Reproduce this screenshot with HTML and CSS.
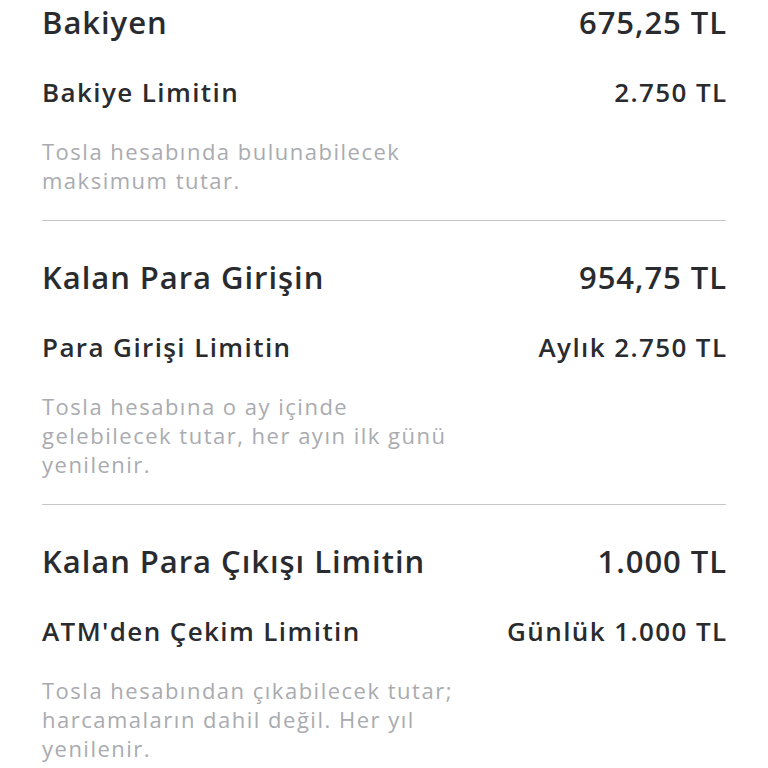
FILE: index.html
```html
<!DOCTYPE html>
<html>

<head>
    <title>Limitlerim</title>
    <link rel="stylesheet" href="styles.css">
</head>

<body>
    <div class="limits">
        <div class="section">
            <div class="row title">
                <span>Bakiyen</span>
                <span class="value">675,25 TL</span>
            </div>
            <div class="row sub">
                <span>Bakiye Limitin</span>
                <span class="value">2.750 TL</span>
            </div>
            <p class="desc">Tosla hesabında bulunabilecek<br>maksimum tutar.</p>
        </div>
        <div class="section">
            <div class="row title">
                <span>Kalan Para Girişin</span>
                <span class="value">954,75 TL</span>
            </div>
            <div class="row sub">
                <span>Para Girişi Limitin</span>
                <span class="value">Aylık 2.750 TL</span>
            </div>
            <p class="desc">Tosla hesabına o ay içinde<br>gelebilecek tutar, her ayın ilk günü<br>yenilenir.</p>
        </div>
        <div class="section">
            <div class="row title">
                <span>Kalan Para Çıkışı Limitin</span>
                <span class="value">1.000 TL</span>
            </div>
            <div class="row sub">
                <span>ATM'den Çekim Limitin</span>
                <span class="value">Günlük 1.000 TL</span>
            </div>
            <p class="desc">Tosla hesabından çıkabilecek tutar;<br>harcamaların dahil değil. Her yıl<br>yenilenir.</p>
        </div>
    </div>
</body>

</html>
```

FILE: styles.css
```css
body {
    margin: 0;
    background-color: #fff;
    font-family: "Open Sans", "Noto Sans", sans-serif;
    color: #2a2b2f;
}

.limits {
    padding: 0 42px;
}

.section {
    padding: 36px 0 25px;
    border-top: 1px solid #c6c6c8;
}

.section:first-child {
    padding-top: 2px;
    border-top: none;
}

.row {
    display: flex;
    justify-content: space-between;
    align-items: center;
}

.title {
    font-size: 31px;
    font-weight: 600;
    line-height: 40px;
    letter-spacing: 0.95px;
}

.sub {
    margin-top: 34px;
    font-size: 26px;
    font-weight: 600;
    line-height: 32px;
    letter-spacing: 1.4px;
}

/* trailing letter-spacing pushes the text off the right edge */
.title .value {
    margin-right: -1px;
}

.sub .value {
    margin-right: -1.5px;
}

.desc {
    margin: 29px 0 0;
    font-size: 22px;
    line-height: 29px;
    letter-spacing: 1.5px;
    color: #a9abb0;
}
```
